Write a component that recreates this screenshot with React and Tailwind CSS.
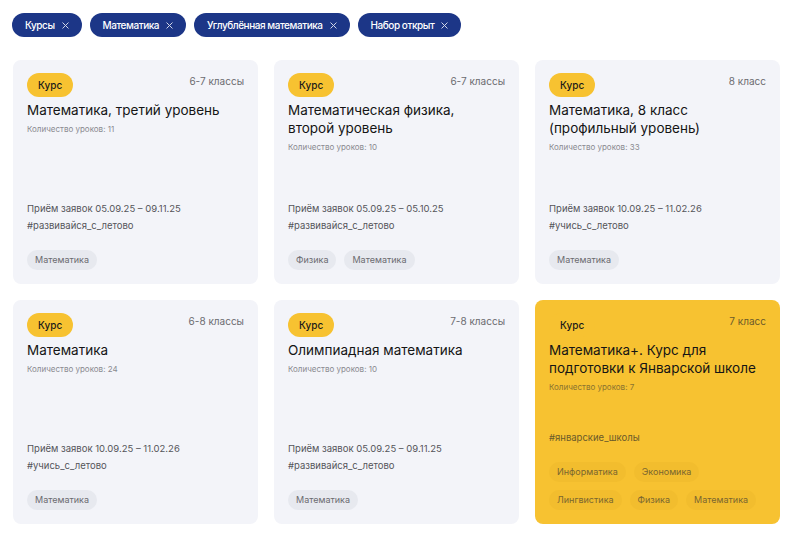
const filters = ["Курсы", "Математика", "Углублённая математика", "Набор открыт"]

// titles break where the reference breaks them
const courses = [
	{
		title: "Математика, третий уровень",
		grade: "6-7 классы",
		lessons: 11,
		dates: "Приём заявок 05.09.25 – 09.11.25",
		hashtag: "#развивайся_с_летово",
		tags: ["Математика"],
	},
	{
		title: "Математическая физика,\nвторой уровень",
		grade: "6-7 классы",
		lessons: 10,
		dates: "Приём заявок 05.09.25 – 05.10.25",
		hashtag: "#развивайся_с_летово",
		tags: ["Физика", "Математика"],
	},
	{
		title: "Математика, 8 класс\n(профильный уровень)",
		grade: "8 класс",
		lessons: 33,
		dates: "Приём заявок 10.09.25 – 11.02.26",
		hashtag: "#учись_с_летово",
		tags: ["Математика"],
	},
	{
		title: "Математика",
		grade: "6-8 классы",
		lessons: 24,
		dates: "Приём заявок 10.09.25 – 11.02.26",
		hashtag: "#учись_с_летово",
		tags: ["Математика"],
	},
	{
		title: "Олимпиадная математика",
		grade: "7-8 классы",
		lessons: 10,
		dates: "Приём заявок 05.09.25 – 09.11.25",
		hashtag: "#развивайся_с_летово",
		tags: ["Математика"],
	},
	{
		title: "Математика+. Курс для\nподготовки к Январской школе",
		grade: "7 класс",
		lessons: 7,
		hashtag: "#январские_школы",
		tags: ["Информатика", "Экономика", "Лингвистика", "Физика", "Математика"],
		highlight: true,
	},
]

const FilterChip = ({ label }) => (
	<div className="flex h-6 items-center gap-[7px] rounded-full bg-[#1c3687] pl-[13px] pr-[13px] text-[10px] font-medium tracking-[-0.45px] text-white">
		<span>{label}</span>
		<svg width="7" height="7" viewBox="0 0 7 7" className="opacity-80">
			<path d="M0.8 0.8 L6.2 6.2 M6.2 0.8 L0.8 6.2" stroke="white" strokeWidth="1" strokeLinecap="round" />
		</svg>
	</div>
)

const CourseCard = ({ course }) => {
	const { title, grade, lessons, dates, hashtag, tags, highlight } = course

	return (
		<div
			className={
				"flex h-[224px] flex-col rounded-lg px-[14px] pb-[14px] pt-[13px] " +
				(highlight ? "bg-[#f7c231]" : "bg-[#f3f4f9]")
			}
		>
			<div className="flex items-start justify-between">
				<span className="flex h-6 items-center rounded-full bg-[#f7c231] px-[11px] text-[10px] font-medium text-[#1a1a1a]">
					Курс
				</span>
				<span
					className={
						"mt-[1px] text-[10px] " +
						(highlight ? "text-[#6b5a2a]" : "text-[#6b6b70]")
					}
				>
					{grade}
				</span>
			</div>

			<h3 className="mt-[4px] whitespace-pre-line text-[13.5px] leading-[18px] text-[#151515]">
				{title}
			</h3>
			<p
				className={
					"mt-[4px] text-[8px] leading-[12px] " +
					(highlight ? "text-[#8a7330]" : "text-[#8a8a90]")
				}
			>
				Количество уроков: {lessons}
			</p>

			<div className="mt-auto">
				{dates && (
					<p className="text-[9.5px] leading-[14px] text-[#555559]">{dates}</p>
				)}
				<p
					className={
						"mt-[3px] text-[9.5px] leading-[13px] " +
						(highlight ? "text-[#6b5a2a]" : "text-[#555559]")
					}
				>
					{hashtag}
				</p>
				<div className="mt-[18px] flex flex-wrap gap-x-[8px] gap-y-[8px]">
					{tags.map((tag, index) => (
						<span
							key={index}
							className={
								"flex h-5 items-center rounded-full px-[8px] text-[9px] " +
								(highlight
									? "bg-[#f2bd2e] text-[#7a6630]"
									: "bg-[#e7e9ef] text-[#6b6b70]")
							}
						>
							{tag}
						</span>
					))}
				</div>
			</div>
		</div>
	)
}

const App = () => {
	return (
		<div className="min-h-screen bg-white pl-[12px] pt-[13px] font-['Inter',sans-serif]">
			<div className="flex gap-2">
				{filters.map((label, index) => (
					<FilterChip key={index} label={label} />
				))}
			</div>

			<div className="ml-[1px] mt-[23px] grid w-[767px] grid-cols-3 gap-4">
				{courses.map((course, index) => (
					<CourseCard key={index} course={course} />
				))}
			</div>
		</div>
	)
}

export default App
